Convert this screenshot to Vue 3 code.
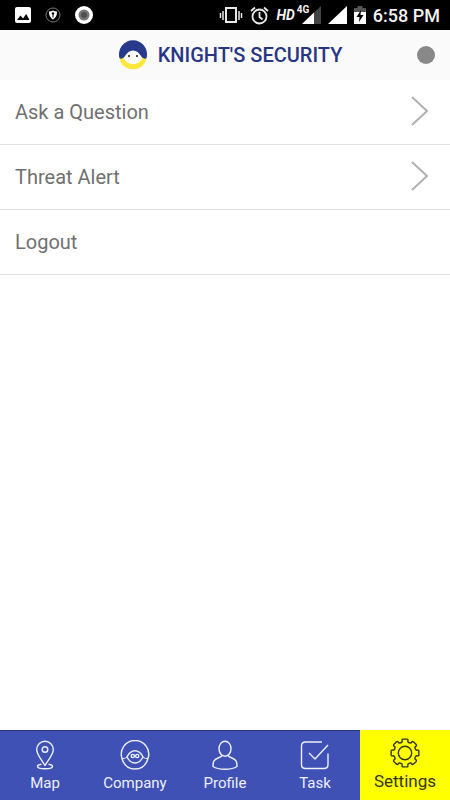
<script setup>
import { ref } from 'vue'

const rows = [
  { label: 'Ask a Question', arrow: true },
  { label: 'Threat Alert', arrow: true },
  { label: 'Logout', arrow: false },
]
const tabs = ['Map', 'Company', 'Profile', 'Task', 'Settings']
const active = ref('Settings')

// Outline of an eight-tooth cog centred in a 30x30 box.
const point = (radius, degrees) => {
  const a = (degrees * Math.PI) / 180
  return `${(15 + radius * Math.sin(a)).toFixed(2)} ${(15 - radius * Math.cos(a)).toFixed(2)}`
}
let cog = ''
for (let i = 0; i < 8; i++) {
  const c = i * 45
  cog += `${i ? 'L' : 'M'}${point(11.6, c - 14)}L${point(13, c - 13)}Q${point(14, c - 13)} ${point(14, c - 8)}`
  cog += `L${point(14, c + 8)}Q${point(14, c + 13)} ${point(13, c + 13)}L${point(11.6, c + 14)}Q${point(10.6, c + 22.5)} ${point(11.6, c + 31)}`
}
cog += 'Z'
</script>

<template>
  <div class="app">
    <div class="status">
      <div class="group notices">
        <svg width="16" height="16" viewBox="0 0 16 16">
          <rect width="16" height="16" rx="2" fill="#fff" />
          <path d="M2 13l3.500-4.500 2.500 3 3.200-4.500L14.500 13z" fill="#000" />
        </svg>
        <svg width="16" height="16" viewBox="0 0 16 16">
          <circle cx="8" cy="8" r="7" fill="none" stroke="#777" />
          <path d="M4 4.500Q6.500 4.500 8 3.500Q9.500 4.500 12 4.500Q12.300 10 8 12.500Q3.700 10 4 4.500z" fill="#fff" />
          <path d="M8 7.500v3" stroke="#000" />
          <circle cx="8" cy="6.500" r="1.300" fill="#000" />
        </svg>
        <svg width="18" height="18" viewBox="0 0 18 18">
          <circle cx="9" cy="9" r="9" fill="#fff" />
          <circle cx="9" cy="9" r="5.500" fill="#777" />
          <circle cx="9" cy="9" r="3" fill="#505050" />
        </svg>
      </div>
      <div class="group signals">
        <svg width="24" height="18" viewBox="0 0 24 18" fill="none" stroke="#e8e8e8">
          <rect x="7" y="2" width="10" height="14" stroke-width="2" />
          <path d="M1.500 7v5M4 5v9M20 5v9M22.500 7v5" stroke-width="1.500" />
        </svg>
        <svg width="19" height="19" viewBox="0 0 19 19" fill="none" stroke="#e8e8e8" stroke-width="1.800">
          <circle cx="9.500" cy="10.500" r="7" />
          <path d="M9.500 6v5l3 2.500M1 5l4-3.500M18 5l-4-3.500" />
        </svg>
        <span class="hd">HD</span>
        <div class="cell">
          <svg width="19" height="18" viewBox="0 0 19 18">
            <path d="M0 18L19 0v18z" fill="#444" />
            <path d="M0 18L12 6.500V18z" fill="#fff" />
          </svg>
          <span class="net">4G</span>
        </div>
        <svg width="19" height="18" viewBox="0 0 19 18"><path d="M0 18L19 0v18z" fill="#fff" /></svg>
        <svg width="12" height="18" viewBox="0 0 12 18">
          <path d="M3.500 0h5v2H12v5H0V2h3.500z" fill="#555" />
          <path d="M0 6h12v12H0z" fill="#fff" />
          <path d="M7 4L2.500 11h3L5 16l4.500-7h-3z" fill="#000" />
        </svg>
        <span class="clock">6:58 PM</span>
      </div>
    </div>

    <header class="header">
      <h1 class="brand">
        <svg width="30" height="30" viewBox="0 0 30 30">
          <path d="M1.500 18Q5 16 8 16h14q3 0 6.500 2C27 25 22 29.300 15 29.300S3 25 1.500 18z" fill="#fbe83a" />
          <path d="M5.500 18.500Q9 10 15 10t9.500 8.500Q21 24 15 24T5.500 18.500z" fill="#fff" />
          <path d="M1.500 18.300A14 14.300 0 1 1 28.500 18.300Q25.500 19.500 23.300 16.500Q20 10.500 15 10.500T6.700 16.500Q4.500 19.500 1.500 18.300z" fill="#283a8c" />
          <circle cx="11" cy="16" r="1.100" fill="#222" /><circle cx="19" cy="16" r="1.100" fill="#222" />
        </svg>
        <span>KNIGHT'S SECURITY</span>
      </h1>
      <span class="dot"></span>
    </header>

    <main class="list">
      <button v-for="row in rows" :key="row.label" class="row" type="button">
        <span>{{ row.label }}</span>
        <svg v-if="row.arrow" class="chevron" width="18" height="32" viewBox="0 0 18 32">
          <path d="M1 1l15 14L1 29" fill="none" stroke="#b0b0b0" stroke-width="2" />
        </svg>
      </button>
    </main>

    <nav class="tabs">
      <button
        v-for="tab in tabs"
        :key="tab"
        type="button"
        class="tab"
        :class="{ active: tab === active }"
        @click="active = tab"
      >
        <svg class="icon" width="30" height="30" viewBox="0 0 30 30">
          <template v-if="tab === 'Map'">
            <path d="M15 25.500C11 19 6.700 14.500 6.700 9.500a8.300 8.300 0 0 1 16.600 0C23.300 14.500 19 19 15 25.500z" />
            <circle cx="15" cy="9.500" r="2.800" />
            <path d="M11.500 24.200C8.500 24.600 7.500 25.300 7.500 26.200C7.500 27.700 11 28.800 15 28.800s7.500-1.100 7.500-2.600c0-.9-1-1.600-4-2" />
          </template>
          <template v-else-if="tab === 'Company'">
            <path d="M2 18.500A13.700 13.700 0 1 1 28 18.500C26 25.500 21.500 29 15 29S4 25.500 2 18.500z" />
            <path d="M7 17Q10 10.700 15 10.700T23 17Q20 23 15 23T7 17z" />
            <path d="M2 18.500Q5 19 7 17M28 18.500Q25 19 23 17" stroke-width="1" />
            <circle cx="12.800" cy="16" r="1.600" /><circle cx="17.200" cy="16" r="1.600" />
          </template>
          <template v-else-if="tab === 'Profile'">
            <ellipse cx="15" cy="8.700" rx="6" ry="7.500" />
            <path d="M12 15.500Q11 17 8 18C4 19.500 3 21.500 3 26.500Q7 29.200 15 29.200T27 26.500C27 21.500 26 19.500 22 18Q19 17 18 15.500" />
          </template>
          <template v-else-if="tab === 'Task'">
            <path d="M22 2H5.500Q1.500 2 1.500 6v18.500q0 4 4 4H24q4 0 4-4V13.500M9 13l6 6L28 5" />
          </template>
          <template v-else>
            <path :d="cog" />
            <circle cx="15" cy="15" r="6.700" />
          </template>
        </svg>
        <span class="label">{{ tab }}</span>
      </button>
    </nav>
  </div>
</template>

<style>
body {
  background: #fff;
}
</style>

<style scoped>
.app {
  display: flex;
  flex-direction: column;
  min-height: 100vh;
  font-family: Roboto, "Liberation Sans", sans-serif;
}
svg {
  display: block;
  flex: none;
}
.status {
  display: flex;
  justify-content: space-between;
  align-items: center;
  height: 30px;
  padding: 0 10px 0 15px;
  background: #000;
  color: #f2f2f2;
}
.group {
  display: flex;
  align-items: center;
}
.notices {
  gap: 14px;
}
.signals {
  gap: 7px;
}
.hd {
  font-size: 14px;
  font-style: italic;
  font-weight: 700;
}
.cell {
  position: relative;
}
.net {
  position: absolute;
  top: -2px;
  left: -5px;
  font-size: 10px;
  line-height: 12px;
  font-weight: 700;
}
.clock {
  font-size: 18px;
  font-weight: 500;
}
.header {
  display: flex;
  align-items: center;
  position: relative;
  height: 50px;
  padding: 0 15px 0 25px;
  background: #fafafa;
}
.brand {
  display: flex;
  align-items: center;
  gap: 10px;
  margin: 0 auto;
  color: #283583;
  font-size: 20px;
  font-weight: 500;
}
.dot {
  position: absolute;
  right: 15px;
  width: 18px;
  height: 18px;
  border-radius: 50%;
  background: #888;
}
.list {
  flex: 1;
}
.row {
  display: flex;
  justify-content: space-between;
  align-items: center;
  width: 100%;
  height: 65px;
  padding: 0 21px 0 15px;
  border: 0;
  border-bottom: 1px solid #e2e2e2;
  background: #fff;
  color: #707070;
  font-family: inherit;
  font-size: 20px;
  text-align: left;
}
.tabs {
  display: grid;
  grid-template-columns: repeat(5, 1fr);
  height: 70px;
  background: #3f51b5;
}
.tab {
  display: flex;
  flex-direction: column;
  align-items: center;
  padding: 9px 0 0;
  border: 0;
  border-top: 1px solid #203478;
  background: #3f51b5;
  color: #eef0fa;
  font-family: inherit;
  font-size: 15px;
}
.icon {
  fill: none;
  stroke: currentColor;
  stroke-width: 1.400;
  stroke-linejoin: round;
}
.label {
  line-height: 26px;
}
.active {
  padding-top: 7px;
  border-color: #ff0;
  background: #ff0;
  color: #33361c;
  font-size: 17px;
}
</style>
